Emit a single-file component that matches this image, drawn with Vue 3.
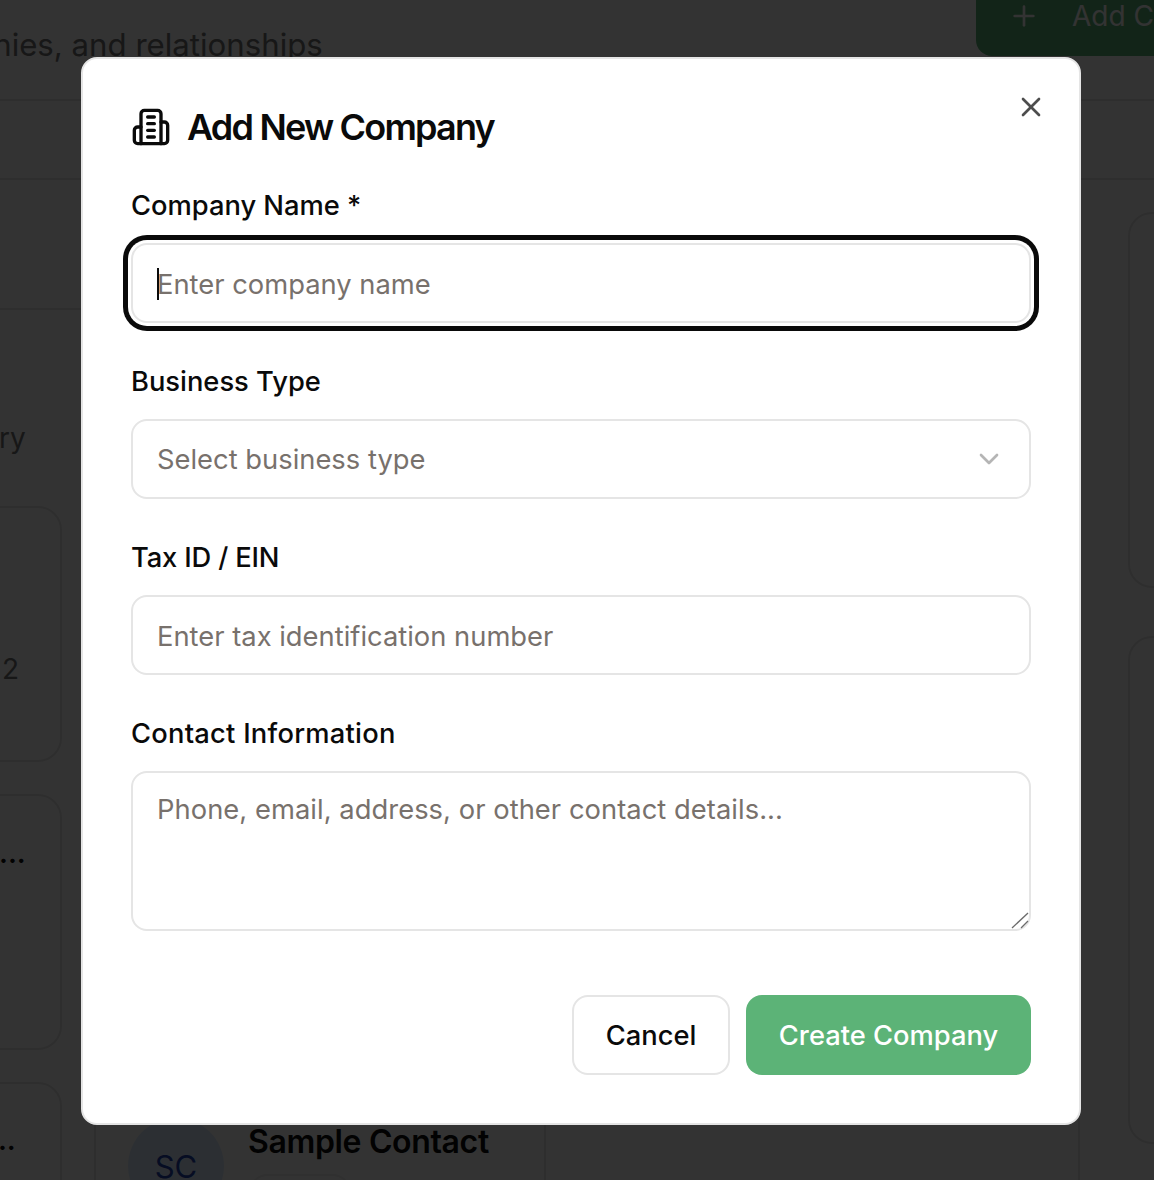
<script setup>
const leftCards = [
  { id: 1, text: '2' },
  { id: 2, text: '...' },
  { id: 3, text: '...' },
]
</script>

<template>
  <div class="page">
    <header class="top">
      <p class="subtitle">Manage contacts, companies, and relationships</p>
      <div class="add">
        <svg class="plus" viewBox="0 0 24 24" fill="none" stroke="currentColor" stroke-width="2" stroke-linecap="round" stroke-linejoin="round"><path d="M5 12h14" /><path d="M12 5v14" /></svg>
        <span>Add Contact</span>
      </div>
    </header>
    <div class="tabs"></div>
    <main class="body">
      <aside class="left">
        <div class="left-head"></div>
        <p class="left-title">Directory</p>
        <div v-for="c in leftCards" :key="c.id" class="left-card" :class="'c' + c.id">
          <span>{{ c.text }}</span>
        </div>
      </aside>
      <section class="middle">
        <div class="contact">
          <div class="cell first">
            <div class="avatar">SC</div>
            <div>
              <div class="cname">Sample Contact</div>
              <div class="cbadge"></div>
            </div>
          </div>
          <div class="cell second"></div>
        </div>
      </section>
      <aside class="right">
        <div class="r-card one"></div>
        <div class="r-card two"></div>
      </aside>
    </main>

    <div class="overlay"></div>

    <div class="modal">
      <svg class="close" viewBox="0 0 24 24" fill="none" stroke="currentColor" stroke-width="2" stroke-linecap="round" stroke-linejoin="round"><path d="M18 6 6 18" /><path d="m6 6 12 12" /></svg>
      <h2 class="title">
        <svg class="building" viewBox="0 0 24 24" fill="none" stroke="currentColor" stroke-width="2" stroke-linecap="round" stroke-linejoin="round"><path d="M6 22V4a2 2 0 0 1 2-2h8a2 2 0 0 1 2 2v18Z" /><path d="M6 12H4a2 2 0 0 0-2 2v6a2 2 0 0 0 2 2h2" /><path d="M18 9h2a2 2 0 0 1 2 2v9a2 2 0 0 1-2 2h-2" /><path d="M10 6h4" /><path d="M10 10h4" /><path d="M10 14h4" /><path d="M10 18h4" /></svg>
        <span>Add New Company</span>
      </h2>

      <label class="label">Company Name *</label>
      <div class="focus-wrap">
        <input class="field focused" type="text" placeholder="Enter company name" />
        <span class="caret"></span>
      </div>

      <label class="label">Business Type</label>
      <div class="field select">
        <span>Select business type</span>
        <svg class="chev" viewBox="0 0 24 24" fill="none" stroke="currentColor" stroke-width="2" stroke-linecap="round" stroke-linejoin="round"><path d="m6 9 6 6 6-6" /></svg>
      </div>

      <label class="label narrow">Tax ID / EIN</label>
      <input class="field" type="text" placeholder="Enter tax identification number" />

      <label class="label wide">Contact Information</label>
      <div class="area-wrap">
        <textarea class="field area" placeholder="Phone, email, address, or other contact details..."></textarea>
        <svg class="grip" viewBox="0 0 18 17" fill="none" stroke="#6b6b6b" stroke-width="1.3"><path d="M1 16 17 1" /><path d="M10 16l7-7" /></svg>
      </div>

      <div class="actions">
        <button class="btn cancel" type="button">Cancel</button>
        <button class="btn create" type="button">Create Company</button>
      </div>
    </div>
  </div>
</template>

<style>
html, body { margin: 0; background: #fff; }
</style>

<style scoped>
.page {
  position: relative;
  width: 1154px;
  height: 1180px;
  overflow: hidden;
  background: #ffffff;
  font-family: Inter, "Liberation Sans", sans-serif;
  color: #0a0a0a;
}
.top {
  height: 101px;
  border-bottom: 2px solid #e5e5e5;
  box-sizing: border-box;
  display: flex;
  justify-content: space-between;
  align-items: flex-start;
}
.subtitle {
  margin: 25px 0 0 -380px;
  font-size: 31.2px;
  line-height: 40px;
  color: #737373;
  white-space: nowrap;
}
.add {
  margin-top: -24px;
  width: 240px;
  margin-right: -62px;
  height: 80px;
  flex: none;
  border-radius: 16px;
  background: #5cb377;
  color: #fff;
  display: flex;
  align-items: center;
  gap: 32px;
  padding: 0 32px;
  box-sizing: border-box;
  font-size: 28px;
  white-space: nowrap;
  overflow: hidden;
}
.plus { width: 32px; height: 32px; flex: none; }
.tabs {
  height: 79px;
  box-sizing: border-box;
  border-bottom: 2px solid #e5e5e5;
}
.body {
  display: flex;
  height: 1000px;
}
.left {
  width: 62px;
  flex: none;
  margin-right: 33px;
  position: relative;
}
.left-head {
  height: 130px;
  border-bottom: 2px solid #e5e5e5;
  width: 100px;
  box-sizing: border-box;
}
.left-title {
  margin: 0;
  padding-top: 108px;
  margin-left: -96px;
  font-size: 28px;
  line-height: 40px;
  color: #737373;
  text-align: left;
  white-space: nowrap;
}
.left-card {
  box-sizing: border-box;
  width: 130px;
  margin-left: -68px;
  height: 256px;
  border: 2px solid #e5e5e5;
  border-radius: 24px;
  margin-bottom: 32px;
  font-size: 28px;
  color: #737373;
  display: flex;
  justify-content: flex-start;
}
.left-card.c1 { margin-top: 48px; }
.left-card.c1 span { margin: 143px 0 0 68px; line-height: 36px; }
.left-card.c2 span, .left-card.c3 span { color: #0a0a0a; line-height: 36px; font-size: 28px; font-weight: 600; margin-top: 39px; margin-left: 65px; }
.left-card.c3 span { margin-top: 38px; margin-left: 55px; }
.middle {
  width: 985px;
  flex: none;
  padding-top: 910px;
  box-sizing: border-box;
}
.contact {
  display: flex;
  height: 200px;
  margin-left: -1px;
}
.cell {
  box-sizing: border-box;
  border-left: 2px solid #e5e5e5;
  height: 200px;
}
.cell.first {
  width: 450px;
  display: flex;
  gap: 24px;
  padding-left: 32px;
}
.cell.second {
  flex: 1;
  border-right: 2px solid #e5e5e5;
}
.avatar {
  margin-top: 28px;
  width: 96px;
  height: 96px;
  flex: none;
  border-radius: 50%;
  background: #dbeafe;
  color: #1e40af;
  font-size: 31px;
  display: flex;
  align-items: center;
  justify-content: center;
}
.cname {
  margin-top: 32px;
  font-size: 32px;
  line-height: 40px;
  font-weight: 600;
  letter-spacing: -0.35px;
  white-space: nowrap;
}
.cbadge {
  margin-top: 12px;
  width: 100px;
  height: 40px;
  border-radius: 20px;
  border: 2px solid #eee;
}
.right {
  margin-left: 48px;
  flex: 1;
  padding-top: 32px;
}
.r-card {
  box-sizing: border-box;
  width: 120px;
  border: 2px solid #e5e5e5;
  border-radius: 24px;
}
.r-card.one { height: 376px; margin-bottom: 48px; }
.r-card.two { height: 508px; }

.overlay {
  position: absolute;
  inset: 0;
  background: rgba(0, 0, 0, 0.8);
}

.modal {
  position: absolute;
  left: 81px;
  top: 57px;
  width: 1000px;
  height: 1068px;
  box-sizing: border-box;
  background: #fff;
  border: 2px solid #e5e5e5;
  border-radius: 16px;
  padding: 48px;
  display: flex;
  flex-direction: column;
}
.close {
  position: absolute;
  right: 32px;
  top: 32px;
  width: 32px;
  height: 32px;
  color: #4d4d4d;
}
.title {
  margin: 0 0 45px;
  height: 40px;
  display: flex;
  align-items: center;
  gap: 16px;
  font-size: 36px;
  line-height: 40px;
  font-weight: 600;
  letter-spacing: -1.8px;
  color: #0a0a0a;
}
.building { width: 40px; height: 40px; flex: none; }
.label {
  display: block;
  font-size: 27.3px;
  line-height: 28px;
  font-weight: 500;
  margin-bottom: 23px;
  color: #0a0a0a;
}
.label.narrow { letter-spacing: -0.15px; }
.label.wide { letter-spacing: 0.25px; }
.field {
  display: block;
  width: 900px;
  height: 80px;
  box-sizing: border-box;
  border: 2px solid #e5e5e5;
  border-radius: 16px;
  background: #fff;
  padding: 2px 24px 0;
  margin: 0 0 45px;
  font-family: inherit;
  font-size: 27.35px;
  color: #78716c;
  outline: none;
}
.field::placeholder { color: #78716c; opacity: 1; }
.focus-wrap { position: relative; }
.focused {
  box-shadow: 0 0 0 3px #fff, 0 0 0 8px #0a0a0a;
  caret-color: transparent;
}
.caret {
  position: absolute;
  left: 26px;
  top: 25px;
  width: 2px;
  height: 32px;
  background: #0a0a0a;
}
.select {
  display: flex;
  align-items: center;
  justify-content: space-between;
  padding-top: 0;
}
.chev { width: 32px; height: 32px; color: #b5b5b5; flex: none; }
.area-wrap { position: relative; }
.area {
  height: 160px;
  padding: 17px 24px 16px;
  line-height: 40px;
  margin-bottom: 64px;
  letter-spacing: 0.04px;
  resize: none;
}
.grip {
  position: absolute;
  left: 880px;
  top: 141px;
  width: 18px;
  height: 17px;
}
.actions {
  display: flex;
  justify-content: flex-end;
  gap: 16px;
}
.btn {
  height: 80px;
  box-sizing: border-box;
  border-radius: 16px;
  font-family: inherit;
  font-size: 27.3px;
  font-weight: 500;
  padding: 0;
}
.cancel {
  width: 158px;
  border: 2px solid #e5e5e5;
  background: #fff;
  color: #0a0a0a;
}
.create {
  width: 285px;
  border: 0;
  background: #5cb377;
  color: #fff;
}
</style>
